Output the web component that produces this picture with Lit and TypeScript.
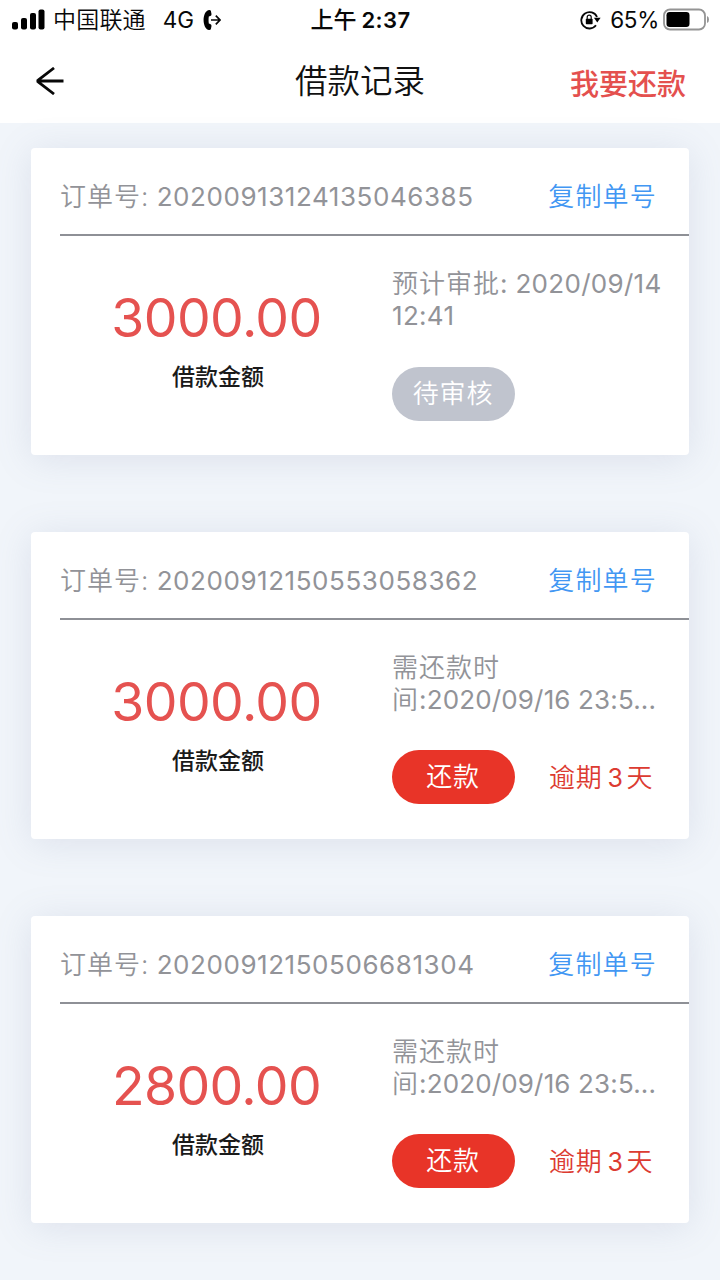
import { LitElement, html, css, nothing } from "lit";
import { customElement, property } from "lit/decorators.js";

interface Loan {
  order: string;
  amount: string;
  lines: [string, string][];
  action: string;
  pending?: boolean;
  overdue?: number;
}

const due: [string, string][] = [["需还款时", ""], ["间", ":2020/09/16 23:5..."]];

const loans: Loan[] = [
  { order: "20200913124135046385", amount: "3000.00", lines: [["预计审批", ": 2020/09/14"], ["", "12:41"]], action: "待审核", pending: true },
  { order: "20200912150553058362", amount: "3000.00", lines: due, action: "还款", overdue: 3 },
  { order: "20200912150506681304", amount: "2800.00", lines: due, action: "还款", overdue: 3 },
];

@customElement("status-bar")
class StatusBar extends LitElement {
  static styles = css`
    :host { display: flex; height: 40px; padding: 0 11px 0 12px; box-sizing: border-box; color: #080808; font-size: 23px; line-height: 40px; white-space: nowrap; }
    .side { flex: 1; display: flex; align-items: center; }
    .right { justify-content: flex-end; }
    svg { display: block; flex: none; margin-top: -1px; }
    .carrier { margin-left: 8px; font-weight: 350; letter-spacing: 0.2px; }
    .net { margin-left: 17px; font-size: 22.5px; }
    .call { margin-left: 9px; }
    .time { font-weight: 500; }
    .digits { font-weight: 600; font-size: 22px; margin-left: 5px; letter-spacing: 0.4px; }
    .pct { margin: 0 4px 0 9px; font-size: 22.5px; letter-spacing: -0.3px; }
  `;
  render() {
    return html`
      <div class="side">
        <svg width="33" height="21" viewBox="0 0 33 21">
          <rect x="0" y="13" width="6" height="7.5" rx="2" />
          <rect x="9" y="9" width="6" height="11.5" rx="2" />
          <rect x="18" y="4" width="6" height="16.5" rx="2" />
          <rect x="26.5" y="0.5" width="6" height="20" rx="2" />
        </svg>
        <span class="carrier">中国联通</span><span class="net">4G</span>
        <svg class="call" width="18" height="22" viewBox="0 0 18 22">
          <path d="M5 1.200Q7.500.5 7.900 2l.6 3q.1 1.600-1.300 2l-1.400.5Q5.300 11 5.800 14.500l1.400.5q1.400.4 1.300 2l-.6 3q-.4 1.500-2.900.8C-.9 18-.9 4 5 1.200Z" />
          <path d="M8 11h9M12.800 6.600 17 11l-4.200 4.400" fill="none" stroke="#080808" stroke-width="1.700" />
        </svg>
      </div>
      <div class="time">上午<span class="digits">2:37</span></div>
      <div class="side right">
        <svg width="21" height="20" viewBox="0 0 21 20">
          <path d="M17 7A8.200 8.200 0 1 0 16 15.300" fill="none" stroke="#080808" stroke-width="1.800" />
          <path d="M13.900 7.800h6.700l-3.300 4.600Z" />
          <rect x="5.800" y="8.800" width="6.800" height="5.400" rx=".7" />
          <path d="M7.200 9V7.200a2 2 0 0 1 4 0V9" fill="none" stroke="#080808" stroke-width="1.200" />
        </svg>
        <span class="pct">65%</span>
        <svg width="46" height="23" viewBox="0 0 46 23">
          <rect x="1" y="1.500" width="41" height="20" rx="6" fill="none" stroke="#949494" stroke-width="1.800" />
          <rect x="3.500" y="4" width="23" height="15" rx="3.200" />
          <path d="M44 8q2 .7 2 3.500t-2 3.500Z" fill="#949494" />
        </svg>
      </div>
    `;
  }
}

@customElement("nav-header")
class NavHeader extends LitElement {
  static styles = css`
    :host { display: grid; grid-template-columns: 1fr auto 1fr; align-items: center; height: 83px; padding: 0 34px; box-sizing: border-box; white-space: nowrap; }
    svg { display: block; }
    .title { font-size: 32.5px; line-height: 48px; color: #111; font-weight: 350; }
    .repay { justify-self: end; font-size: 29px; line-height: 42px; font-weight: 500; color: #e4504e; margin-top: 6px; }
    .back { margin-bottom: 1px; }
  `;
  render() {
    return html`
      <svg class="back" width="30" height="28" viewBox="0 0 30 28" fill="none" stroke="#080808" stroke-width="2.800">
        <path d="M2.500 14h27M20 1 4.500 12.800q-1.500 1.200 0 2.400L20 27" />
      </svg>
      <div class="title">借款记录</div>
      <div class="repay">我要还款</div>
    `;
  }
}

@customElement("loan-card")
class LoanCard extends LitElement {
  @property({ attribute: false }) loan!: Loan;
  static styles = css`
    :host { display: block; height: 307px; box-sizing: border-box; background: #fff; border-radius: 4px; box-shadow: 0 4px 36px rgba(120, 130, 165, 0.17); color: #929398; font-size: 26px; white-space: nowrap; }
    .head { display: flex; justify-content: space-between; height: 88px; margin-left: 29px; padding: 10px 32px 0 0; box-sizing: border-box; border-bottom: 2px solid #8e9096; line-height: 78px; }
    .zh { letter-spacing: 1px; font-weight: 350; }
    .order { letter-spacing: 0.56px; margin-left: -1px; }
    .copy { color: #4297f3; letter-spacing: 1.2px; font-weight: 350; }
    .body { display: grid; grid-template-columns: 361px 1fr; }
    .sum { padding: 49px 0 0 13px; text-align: center; }
    .amount { font-size: 53.5px; line-height: 66px; color: #e55250; letter-spacing: -0.6px; margin-left: -3px; }
    .label { font-size: 23px; line-height: 34px; color: #1a1a1a; font-weight: 500; margin-top: 9px; }
    .when { padding-top: 32px; line-height: 32px; letter-spacing: 0.3px; }
    .due { letter-spacing: 0.15px; }
    .when > div { height: 32px; }
    .foot { display: flex; align-items: center; margin-top: 34.5px; font-weight: 350; }
    .pill { width: 123px; height: 54px; border-radius: 27px; background: #e83428; color: #fff; line-height: 54px; text-align: center; letter-spacing: 0.8px; text-indent: -1px; }
    .pending { background: #c0c4ce; }
    .overdue { margin: -4px 0 0 34px; color: #dc3b31; letter-spacing: 0.7px; }
    .days { margin: 0 3px 0 5px; font-weight: 400; font-size: 25px; }
  `;
  render() {
    const l = this.loan;
    return html`
      <div class="head">
        <div><span class="zh">订单号: </span><span class="order">${l.order}</span></div>
        <div class="copy">复制单号</div>
      </div>
      <div class="body">
        <div class="sum">
          <div class="amount">${l.amount}</div>
          <div class="label">借款金额</div>
        </div>
        <div>
          <div class="when ${l.pending ? "" : "due"}">${l.lines.map(([zh, num]) => html`<div><span class="zh">${zh}</span><span>${num}</span></div>`)}</div>
          <div class="foot">
            <div class="pill ${l.pending ? "pending" : ""}">${l.action}</div>
            ${l.overdue ? html`<div class="overdue">逾期<span class="days">${l.overdue}</span>天</div>` : nothing}
          </div>
        </div>
      </div>
    `;
  }
}

@customElement("app-root")
class AppRoot extends LitElement {
  static styles = css`
    :host { display: block; width: 720px; height: 1280px; overflow: hidden; background: #f1f5fa; font-family: Inter, "Noto Sans CJK SC", sans-serif; }
    .top { background: #fff; }
    .list { display: flex; flex-direction: column; gap: 76.8px; padding: 25px 31px 0; }
  `;
  render() {
    return html`
      <div class="top"><status-bar></status-bar><nav-header></nav-header></div>
      <div class="list">${loans.map((l) => html`<loan-card .loan=${l}></loan-card>`)}</div>
    `;
  }
}
